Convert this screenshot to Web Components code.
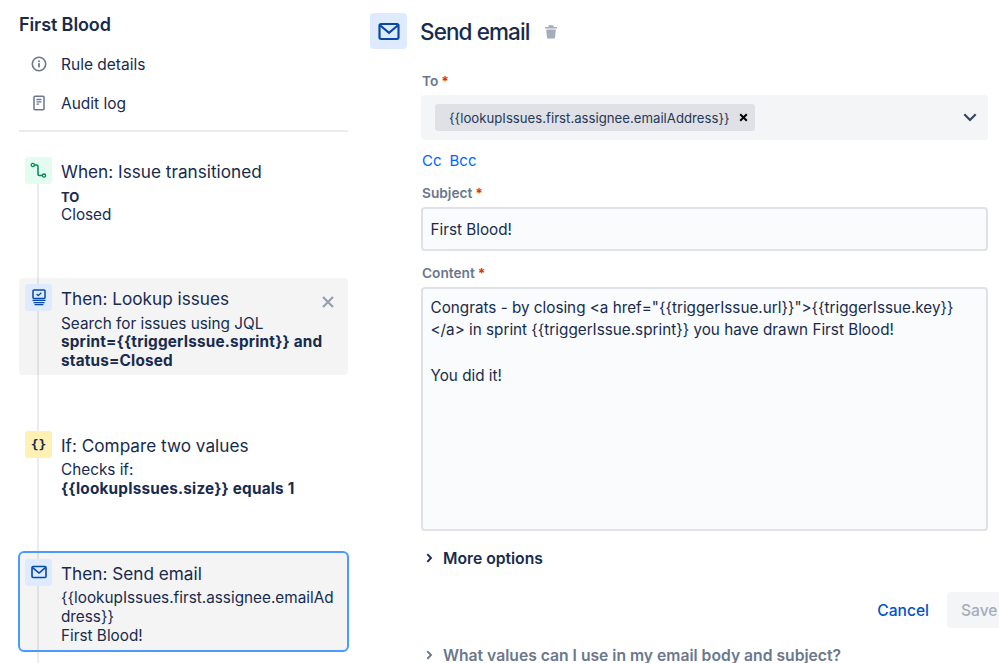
<!DOCTYPE html>
<html lang="en">
<head>
<meta charset="utf-8">
<title>First Blood</title>
<style>
  html, body { margin: 0; height: 663px; overflow: hidden; background: #fff; }
  body { font-family: Inter, "Liberation Sans", sans-serif; color: #172b4d; }
</style>
</head>
<body>
<rule-page>
  <rule-sidebar slot="side" name="First Blood">
    <nav-entry icon="info">Rule details</nav-entry>
    <nav-entry icon="log">Audit log</nav-entry>
    <rule-step slot="steps" kind="when" title="When: Issue transitioned" style="min-height:127px">
      <b class="to">TO</b><br>Closed
    </rule-step>
    <rule-step slot="steps" kind="lookup" title="Then: Lookup issues" card removable style="margin-bottom:50px">
      Search for issues using JQL<br><b>sprint={{triggerIssue.sprint}} and status=Closed</b>
    </rule-step>
    <rule-step slot="steps" kind="if" title="If: Compare two values" style="min-height:126px">
      Checks if:<br><b>{{lookupIssues.size}} equals 1</b>
    </rule-step>
    <rule-step slot="steps" kind="email" title="Then: Send email" card active>
      {{lookupIssues.first.assignee.emailAd<wbr>dress}}<br>First Blood!
    </rule-step>
  </rule-sidebar>
  <email-form slot="main"></email-form>
</rule-page>

<script>
const ICONS = {
  info: `<svg width="16" height="16" viewBox="0 0 16 16" fill="none"><circle cx="8" cy="8" r="6.7" stroke="#6b778c" stroke-width="1.6"/><circle cx="8" cy="5.2" r="1" fill="#6b778c"/><rect x="7.1" y="7" width="1.8" height="4.4" rx=".6" fill="#6b778c"/></svg>`,
  log: `<svg width="16" height="16" viewBox="0 0 16 16" fill="none"><rect x="3" y="1.2" width="10" height="13.6" rx="1" stroke="#6b778c" stroke-width="1.5"/><path d="M5.5 4.5h5M5.5 6.8h5M5.5 9.1h2.6" stroke="#6b778c" stroke-width="1.3"/></svg>`,
  when: `<svg width="17" height="17" viewBox="0 0 17 17" fill="none"><circle cx="2.8" cy="3" r="1.6" stroke="#00875a" stroke-width="1.3"/><circle cx="14" cy="13.6" r="1.6" stroke="#00875a" stroke-width="1.3"/><path d="M4.4 3H6.6c.9 0 1.4.5 1.4 1.4v7.8c0 .9.5 1.4 1.4 1.4h3" stroke="#00875a" stroke-width="1.5"/></svg>`,
  lookup: `<svg width="16" height="17" viewBox="0 0 16 17" fill="none"><rect x="2" y="1" width="12" height="8.6" rx="1" stroke="#0747a6" stroke-width="1.5"/><path d="M5.6 5l1.7 1.7 3-3" stroke="#0747a6" stroke-width="1.3"/><path d="M1.5 11.4h13M2.5 13.6h11M3.6 15.6h8.8" stroke="#0747a6" stroke-width="1.4"/></svg>`,
  email: `<svg width="16" height="14" viewBox="0 0 16 14" fill="none"><rect x="1" y="1.5" width="14" height="11" rx="1.2" stroke="#0747a6" stroke-width="1.6"/><path d="M1.6 2.6L8 8l6.4-5.4" stroke="#0747a6" stroke-width="1.6"/></svg>`,
};

class RulePage extends HTMLElement {
  constructor() {
    super();
    this.attachShadow({ mode: "open" });
    this.shadowRoot.innerHTML = `
      <style>
        :host { display: flex; width: 999px; height: 663px; overflow: hidden; }
        .side { flex: 0 0 329px; padding-left: 19px; }
        .main { flex: 1 0 auto; padding-left: 22px; }
      </style>
      <div class="side"><slot name="side"></slot></div>
      <div class="main"><slot name="main"></slot></div>
    `;
  }
}

class RuleSidebar extends HTMLElement {
  constructor() {
    super();
    this.attachShadow({ mode: "open" });
    this.shadowRoot.innerHTML = `
      <style>
        :host { display: block; }
        h1 { margin: 0; padding-top: 13px; font-size: 18px; line-height: 23px; font-weight: 600; letter-spacing: -.1px; }
        .nav { display: flex; flex-direction: column; gap: 11px; padding-top: 14px; }
        hr { border: 0; height: 2px; background: #ebecf0; margin: 13px 0 19px; }
        .timeline { position: relative; height: 600px; }
        .line { position: absolute; left: 18px; top: 33px; bottom: 0; width: 2px; background: #ebecf0; }
        .steps { position: relative; }
      </style>
      <h1></h1>
      <div class="nav"><slot></slot></div>
      <hr>
      <div class="timeline">
        <div class="line"></div>
        <div class="steps"><slot name="steps"></slot></div>
      </div>
    `;
  }
  connectedCallback() {
    this.shadowRoot.querySelector("h1").textContent = this.getAttribute("name");
  }
}

class NavEntry extends HTMLElement {
  constructor() {
    super();
    this.attachShadow({ mode: "open" });
    this.shadowRoot.innerHTML = `
      <style>
        :host { display: flex; align-items: center; height: 28px; padding-left: 12px; gap: 14px; font-size: 15.5px; }
        .ic { display: flex; width: 16px; }
      </style>
      <span class="ic"></span><span><slot></slot></span>
    `;
  }
  connectedCallback() {
    this.shadowRoot.querySelector(".ic").innerHTML = ICONS[this.getAttribute("icon")];
  }
}

class RuleStep extends HTMLElement {
  constructor() {
    super();
    this.attachShadow({ mode: "open" });
    this.shadowRoot.innerHTML = `
      <style>
        :host { display: grid; grid-template-columns: 27px 1fr; column-gap: 9px; box-sizing: border-box;
          position: relative; padding: 6px 6px 4px; border-radius: 4px; }
        :host([card]) { background: rgba(0, 0, 0, .042); }
        :host([active]) { margin: 0 -1px; padding: 6px 13px 6px 5px; border: 2px solid #4c9aff; border-radius: 6px; height: 101px; }
        .icon { width: 27px; height: 27px; border-radius: 3px; display: flex; align-items: center; justify-content: center;
          font: bold 13px "DejaVu Sans Mono", monospace; }
        .when { background: #e3fcef; }
        .lookup, .email { background: #deebff; }
        .if { background: #fff0b3; color: #172b4d; }
        .title { font-size: 17.2px; line-height: 29.6px; }
        .body { font-size: 15.3px; line-height: 18.7px; padding-top: 1px; overflow-wrap: anywhere; }
        .close { position: absolute; right: 14px; top: 14px; width: 12px; height: 12px; }
        ::slotted(b) { font-weight: 700; letter-spacing: .2px; }
        ::slotted(b.to) { font-size: 13px; letter-spacing: 0; }
      </style>
      <div class="icon"></div>
      <div>
        <div class="title"></div>
        <div class="body"><slot></slot></div>
      </div>
    `;
  }
  connectedCallback() {
    const kind = this.getAttribute("kind");
    const icon = this.shadowRoot.querySelector(".icon");
    icon.classList.add(kind);
    if (kind === "if") icon.textContent = "{}";
    else icon.innerHTML = ICONS[kind];
    this.shadowRoot.querySelector(".title").textContent = this.getAttribute("title");
    this.removeAttribute("title");
    if (this.hasAttribute("removable")) {
      const x = document.createElement("div");
      x.className = "close";
      x.innerHTML = `<svg width="12" height="12" viewBox="0 0 12 12"><path d="M1 1l10 10M11 1L1 11" stroke="#97a0af" stroke-width="2.2"/></svg>`;
      this.shadowRoot.appendChild(x);
    }
  }
}

class FormField extends HTMLElement {
  constructor() {
    super();
    this.attachShadow({ mode: "open" });
    this.shadowRoot.innerHTML = `
      <style>
        :host { display: block; }
        .label { font-size: 13.7px; line-height: 20px; font-weight: 600; color: #6b778c; padding-left: 1px; margin-bottom: 4px; }
        .req { color: #de350b; font-weight: 700; margin-left: 3px; }
      </style>
      <div class="label"><span class="txt"></span><span class="req">*</span></div>
      <slot></slot>
    `;
  }
  connectedCallback() {
    this.shadowRoot.querySelector(".txt").textContent = this.getAttribute("label");
  }
}

class EmailForm extends HTMLElement {
  constructor() {
    super();
    this.attachShadow({ mode: "open" });
    this.shadowRoot.innerHTML = `
      <style>
        :host { display: block; font-size: 15.25px; }
        .head { display: flex; align-items: center; gap: 13px; padding-top: 13px; height: 36px; }
        .big { width: 37px; height: 36px; background: #deebff; border-radius: 4px; display: flex; align-items: center; justify-content: center; }
        .big svg { width: 22px; height: 19px; }
        h2 { margin: 0; font-size: 22.5px; font-weight: 500; letter-spacing: -.9px; }
        .trash { margin-left: 1px; display: flex; }
        .form { margin-left: 51px; width: 567px; padding-top: 22px; }
        .to { background: #f4f5f7; border-radius: 4px; height: 45px; display: flex; align-items: center; justify-content: space-between; padding: 0 11px 0 14px; box-sizing: border-box; }
        .chip { background: #dfe1e6; border-radius: 3px; height: 27px; width: 320px; box-sizing: border-box; display: flex; align-items: center; justify-content: space-between; padding: 0 7px 0 14px; font-size: 13.2px; color: #253858; }
        .links { display: flex; gap: 8px; color: #0065ff; font-size: 15px; line-height: 20px; padding: 11px 0 12px 1px; }
        .box { border: 2px solid #dfe1e6; border-radius: 4px; background: #fafbfc; box-sizing: border-box; padding: 0 7.5px; }
        .subject { height: 44px; display: flex; align-items: center; margin-bottom: 12px; }
        .content { height: 244px; padding-top: 8px; line-height: 22.4px; }
        .content p { margin: 0 0 23.2px; }
        .toggle { display: flex; align-items: center; gap: 10px; padding-left: 5px; font-weight: 600; font-size: 15.7px; }
        .more { margin-top: 17px; height: 20px; color: #172b4d; }
        .actions { display: flex; justify-content: flex-end; align-items: center; gap: 18px; margin: 24px -25px 0 0; font-weight: 500; font-size: 15.6px; }
        .cancel { color: #0052cc; }
        .save { background: #f4f5f7; color: #a5adba; height: 36px; width: 66px; box-sizing: border-box; padding-left: 14px; display: flex; align-items: center; border-radius: 4px; }
        .help { margin-top: 17px; height: 20px; color: #6b778c; }
      </style>
      <div class="head">
        <div class="big">${ICONS.email}</div>
        <h2>Send email</h2>
        <span class="trash"><svg width="14" height="15" viewBox="0 0 14 15"><path d="M1 3h12v1.6H1zM4.5 1.2h5V3h-5z" fill="#a5adba"/><path d="M2.2 5.4h9.6l-.9 9H3.1z" fill="#a5adba"/></svg></span>
      </div>
      <div class="form">
        <form-field label="To">
          <div class="to">
            <div class="chip"><span>{{lookupIssues.first.assignee.emailAddress}}</span>
              <svg width="9" height="9" viewBox="0 0 9 9"><path d="M1.2 1.2l6.6 6.6M7.8 1.2L1.2 7.8" stroke="#000" stroke-width="2"/></svg></div>
            <svg width="14" height="9" viewBox="0 0 14 9" fill="none"><path d="M1.3 1.3L7 7l5.7-5.7" stroke="#344563" stroke-width="2.2"/></svg>
          </div>
        </form-field>
        <div class="links"><span>Cc</span><span>Bcc</span></div>
        <form-field label="Subject"><div class="box subject">First Blood!</div></form-field>
        <form-field label="Content">
          <div class="box content">
            <p>Congrats - by closing &lt;a href="{{triggerIssue.url}}"&gt;{{triggerIssue.key}}<br>&lt;/a&gt; in sprint {{triggerIssue.sprint}} you have drawn First Blood!</p>
            <p>You did it!</p>
          </div>
        </form-field>
        <div class="toggle more"><svg width="7" height="10" viewBox="0 0 7 10" fill="none"><path d="M1.3 1.2L5 5 1.3 8.8" stroke="#172b4d" stroke-width="1.9"/></svg><span>More options</span></div>
        <div class="actions"><span class="cancel">Cancel</span><span class="save">Save</span></div>
        <div class="toggle help"><svg width="7" height="10" viewBox="0 0 7 10" fill="none"><path d="M1.3 1.2L5 5 1.3 8.8" stroke="#6b778c" stroke-width="1.9"/></svg><span>What values can I use in my email body and subject?</span></div>
      </div>
    `;
  }
}

customElements.define("rule-page", RulePage);
customElements.define("rule-sidebar", RuleSidebar);
customElements.define("nav-entry", NavEntry);
customElements.define("rule-step", RuleStep);
customElements.define("form-field", FormField);
customElements.define("email-form", EmailForm);
</script>
</body>
</html>
